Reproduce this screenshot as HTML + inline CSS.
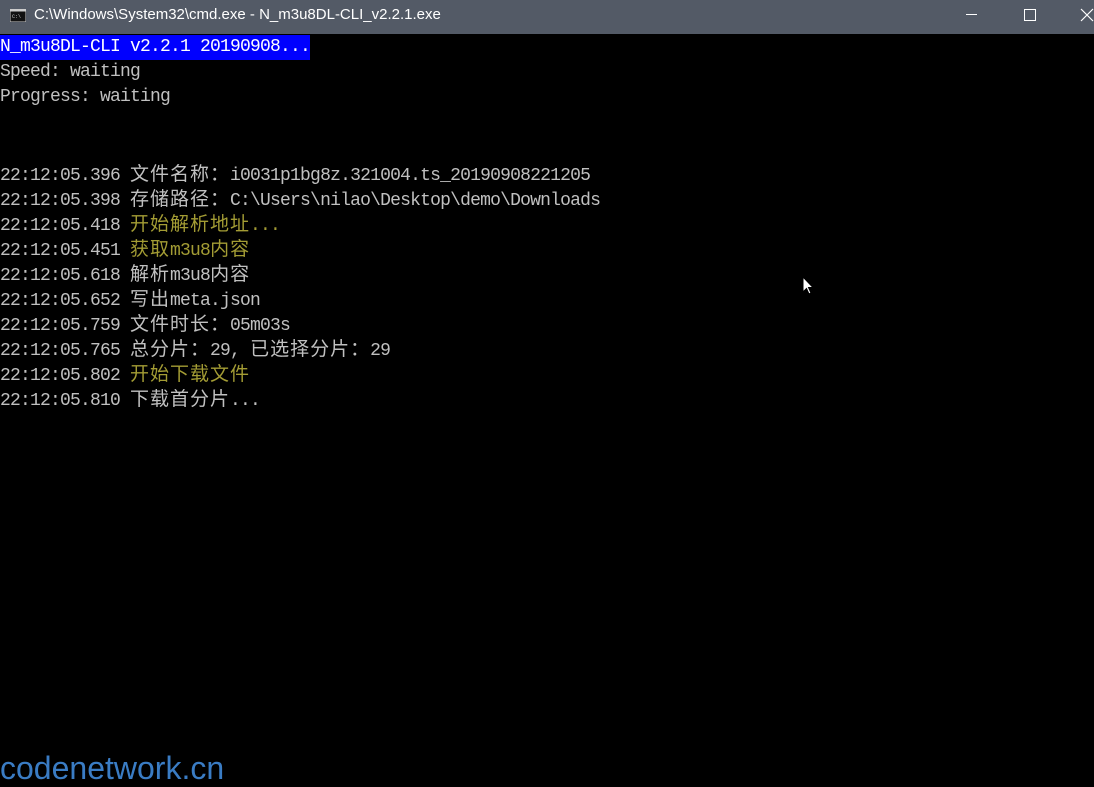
<!DOCTYPE html>
<html><head><meta charset="utf-8"><style>
html,body{margin:0;padding:0;}
body{width:1094px;height:782px;background:#000;position:relative;overflow:hidden;}
.tb{position:absolute;left:0;top:0;width:1094px;height:34px;background:#535a66;}
.tt{position:absolute;left:34px;top:6px;color:#fff;font:15px "Liberation Sans",sans-serif;}
.con{position:absolute;left:0;top:35px;font-family:"Liberation Mono",monospace;font-size:18px;letter-spacing:-0.8px;line-height:25px;color:#c0c0c0;}
.l{height:25px;white-space:pre;}
.c{font-family:"Noto Sans CJK SC",sans-serif;font-size:19px;letter-spacing:1px;}
.y{color:#a39c34;}
.hl{background:#0000ff;color:#fff;display:inline-block;}
.wm{position:absolute;left:0;top:750px;color:#3a7cc4;font:32px "Liberation Sans",sans-serif;}
</style></head><body>
<div class="tb">
<svg style="position:absolute;left:10px;top:9px" width="16" height="13"><rect x="0" y="0" width="16" height="13" fill="#111" stroke="#ccc" stroke-width="1"/><rect x="0.5" y="0.5" width="15" height="2" fill="#ccc"/><text x="2" y="9" font-size="5" fill="#ccc" font-family="Liberation Mono">C:\</text></svg>
<div class="tt">C:\Windows\System32\cmd.exe - N_m3u8DL-CLI_v2.2.1.exe</div>
<div style="position:absolute;left:966px;top:14px;width:11px;height:1px;background:#fff"></div>
<div style="position:absolute;left:1024px;top:9px;width:10px;height:10px;border:1px solid #fff"></div>
<svg style="position:absolute;left:1080px;top:8px" width="14" height="14"><path d="M1 1L13 13M13 1L1 13" stroke="#fff" stroke-width="1.2"/></svg>
</div>
<div class="con"><div class="l"><span class="hl">N_m3u8DL-CLI v2.2.1 20190908...</span></div><div class="l">Speed: waiting</div><div class="l">Progress: waiting</div><div class="l"> </div><div class="l"> </div><div class="l">22:12:05.396 <span class="c">文件名称：</span>i0031p1bg8z.321004.ts_20190908221205</div><div class="l">22:12:05.398 <span class="c">存储路径：</span>C:\Users\nilao\Desktop\demo\Downloads</div><div class="l">22:12:05.418 <span class="y"><span class="c">开始解析地址</span>...</span></div><div class="l">22:12:05.451 <span class="y"><span class="c">获取</span>m3u8<span class="c">内容</span></span></div><div class="l">22:12:05.618 <span class="c">解析</span>m3u8<span class="c">内容</span></div><div class="l">22:12:05.652 <span class="c">写出</span>meta.json</div><div class="l">22:12:05.759 <span class="c">文件时长：</span>05m03s</div><div class="l">22:12:05.765 <span class="c">总分片：</span>29, <span class="c">已选择分片：</span>29</div><div class="l">22:12:05.802 <span class="y c">开始下载文件</span></div><div class="l">22:12:05.810 <span class="c">下载首分片</span>...</div></div>
<svg style="position:absolute;left:802px;top:276px" width="13" height="20"><path d="M1 1L1 16L4.5 12.5L7 18L9 17L6.5 11.5L11 11.5Z" fill="#fff" stroke="#000" stroke-width="1"/></svg>
<div class="wm">codenetwork.cn</div>
</body></html>
